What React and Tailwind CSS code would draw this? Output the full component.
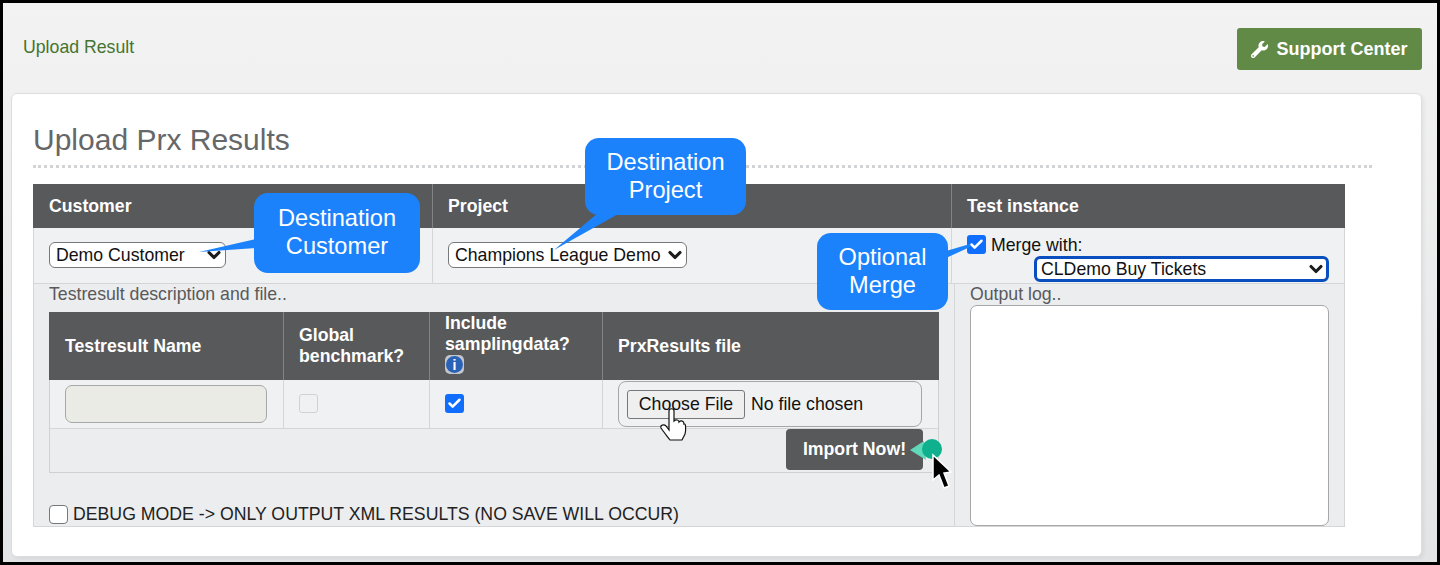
import { FaWrench } from "react-icons/fa";
import { Check, ChevronDown } from "lucide-react";

function Select({ label, className, bold }) {
  return (
    <div className={`relative bg-white text-[#111] rounded-[6px] flex items-center h-[26px] ${bold ? "border-[3px] border-[#0a4fc0] pl-[4px]" : "border border-[#77787a] pl-[6px]"} ${className}`}>
      {label}
      <ChevronDown size={20} strokeWidth={3.8} className={`absolute text-[#1c1c1c] ${bold ? "right-[0px] top-[0px]" : "right-[1px] top-[2px]"}`} />
    </div>
  );
}

function Checkbox({ checked, className = "" }) {
  if (checked) {
    return (
      <span className={`w-[19px] h-[19px] rounded-[3px] bg-[#0f6efd] flex items-center justify-center shrink-0 ${className}`}>
        <Check size={15} strokeWidth={4} className="text-white" />
      </span>
    );
  }
  return <span className={`w-[19px] h-[19px] rounded-[4px] border border-[#77787a] bg-white shrink-0 ${className}`} />;
}

function Callout({ className, lines }) {
  return (
    <div className={`absolute bg-[#1b82fb] text-white rounded-[14px] flex flex-col items-center justify-center pb-[2px] text-[23.6px] leading-[28px] ${className}`}>
      {lines.map((l) => (
        <span key={l}>{l}</span>
      ))}
    </div>
  );
}

export default function App() {
  return (
    <div className="relative w-[1440px] h-[565px] overflow-hidden border-[3px] border-black bg-gradient-to-b from-[#f3f3f3] to-[#e3e4e6] text-[17.7px] font-['Liberation_Sans',sans-serif]">
      {/* top bar */}
      <div className="h-[90px] pl-[20px] pr-[15px] flex justify-between">
        <a className="text-[#44742f] mt-[33px] leading-[22px]">Upload Result</a>
        <button className="mt-[25px] h-[42px] w-[185px] rounded-[3px] bg-[#628a47] text-white font-bold text-[18px] flex items-center justify-center gap-[8px]">
          <FaWrench size={17} />
          Support Center
        </button>
      </div>

      {/* card */}
      <div className="ml-[8px] w-[1411px] h-[464px] bg-white border border-[#dcddde] rounded-[6px] pl-[21px] shadow-[2px_2px_4px_rgba(0,0,0,0.06)]">
        <h1 className="pt-[29px] pb-[8px] leading-[34px] text-[30px] text-[#666768] w-[1339px] border-b-[3px] border-dotted border-[#d2d3d4]">
          Upload Prx Results
        </h1>

        <div className="mt-[16px] w-[1312px] h-[343px] flex flex-col border-x border-b border-[#d5d6d7] bg-[#ecedef]">
          {/* header */}
          <div className="h-[44px] grid grid-cols-[400px_519px_1fr] bg-[#58595b] text-white font-bold shrink-0 -mx-px">
            <div className="pl-[16px] flex items-center border-r border-[#828385]">Customer</div>
            <div className="pl-[15px] flex items-center border-r border-[#828385]">Project</div>
            <div className="pl-[15px] flex items-center">Test instance</div>
          </div>

          {/* selects row */}
          <div className="h-[56px] grid grid-cols-[399px_519px_1fr] bg-[#f0f1f2] border-b border-[#d5d6d7] shrink-0">
            <div className="pl-[15px] pt-[14px] border-r border-[#d5d6d7]">
              <Select label="Demo Customer" className="w-[177px]" />
            </div>
            <div className="pl-[15px] pt-[14px] border-r border-[#d5d6d7]">
              <Select label="Champions League Demo" className="w-[239px]" />
            </div>
            <div className="pl-[15px] pt-[7px]">
              <div className="flex items-center gap-[5px] h-[19px] text-[#111]">
                <Checkbox checked />
                <span className="pt-[1px]">Merge with:</span>
              </div>
              <Select bold label="CLDemo Buy Tickets" className="ml-[67px] mt-[2px] w-[295px]" />
            </div>
          </div>

          {/* lower section */}
          <div className="flex-1 flex">
            <div className="w-[921px] border-r border-[#d5d6d7] pl-[15px] flex flex-col">
              <div className="text-[#58595b] leading-[22px] -mt-[1px]">Testresult description and file..</div>
              <div className="mt-[7px] w-[890px] h-[161px] border-x border-b border-[#cfd0d1] flex flex-col">
                <div className="h-[68px] grid grid-cols-[235px_146px_173px_1fr] bg-[#58595b] text-white font-bold leading-[21px] -mx-px shrink-0">
                  <div className="pl-[16px] flex items-center border-r border-[#828385]">Testresult Name</div>
                  <div className="pl-[15px] flex items-center border-r border-[#828385]">
                    <span>Global<br />benchmark?</span>
                  </div>
                  <div className="pl-[15px] pt-[1px] border-r border-[#828385]">
                    Include<br />samplingdata?
                    <span className="block w-[19px] h-[19px] rounded-[5px] bg-[#c3c6ca] p-[1px]">
                      <span className="flex items-center justify-center w-full h-full rounded-full bg-[#2a62b8] text-white text-[14px] leading-none font-bold">i</span>
                    </span>
                  </div>
                  <div className="pl-[15px] flex items-center">PrxResults file</div>
                </div>
                <div className="h-[49px] grid grid-cols-[234px_146px_173px_1fr] bg-[#f0f1f2] border-b border-[#d5d6d7] shrink-0">
                  <div className="border-r border-[#d5d6d7] pl-[15px] pt-[5px]">
                    <div className="w-[202px] h-[38px] rounded-[7px] bg-[#ebebe6] border border-[#a6a7a8]" />
                  </div>
                  <div className="border-r border-[#d5d6d7] pl-[15px] pt-[14px]">
                    <span className="block w-[19px] h-[19px] rounded-[3px] border border-[#d0d1d2] bg-[#f0f1f2]" />
                  </div>
                  <div className="border-r border-[#d5d6d7] pl-[15px] pt-[14px]">
                    <Checkbox checked />
                  </div>
                  <div className="pl-[15px] pt-[1px]">
                    <div className="w-[304px] h-[46px] rounded-[8px] border border-[#a6a7a8] flex items-center pl-[8px] gap-[6px] text-[#111]">
                      <span className="w-[118px] h-[29px] rounded-[3px] border border-[#77787a] bg-[#efefef] flex items-center justify-center">Choose File</span>
                      No file chosen
                    </div>
                  </div>
                </div>
                <div className="flex justify-end pr-[15px]">
                  <button className="w-[137px] h-[41px] rounded-[4px] bg-[#58595b] text-white font-bold">Import Now!</button>
                </div>
              </div>
              <div className="mt-[30px] flex items-center gap-[5px] text-[#222] leading-[22px]">
                <Checkbox />
                DEBUG MODE -&gt; ONLY OUTPUT XML RESULTS (NO SAVE WILL OCCUR)
              </div>
            </div>
            <div className="flex-1 pl-[15px] flex flex-col">
              <div className="text-[#58595b] leading-[22px] -mt-[1px]">Output log..</div>
              <div className="w-[359px] h-[221px] bg-white border border-[#a6a7a8] rounded-[7px]" />
            </div>
          </div>
        </div>
      </div>

      {/* annotation overlay, offset by the 3px page border */}
      <svg className="absolute -left-[3px] -top-[3px]" width="1440" height="565">
        <polygon points="199,252 256,239 256,248" fill="#1b82fb" />
        <polygon points="554,250 598,213 620,213" fill="#1b82fb" />
        <polygon points="946,251 946,258 970,247 970,244" fill="#1b82fb" />
        <polygon points="910,450 924,441 926,460" fill="#5fd9b9" />
        <circle cx="932" cy="449" r="10" fill="#0eb08d" />
        <path d="M933 455 L933 480 L939 475 L944 488 L949 486 L944 473 L951 472 Z" fill="#000" stroke="#fff" strokeWidth="1.5" />
        <path d="M669 411 C669 408 674 408 674 411 L674 421 C676 419 679 420 679 422 C681 420 684 421 684 424 C686 423 686 430 685 434 L682 440 L670 440 C667 436 663 431 661 428 C660 425 664 424 666 426 L669 430 Z" fill="#fff" stroke="#111" strokeWidth="1.2" />
      </svg>
      <Callout className="left-[251px] top-[190px] w-[166px] h-[80px]" lines={["Destination", "Customer"]} />
      <Callout className="left-[582px] top-[135px] w-[161px] h-[77px]" lines={["Destination", "Project"]} />
      <Callout className="left-[814px] top-[230px] w-[131px] h-[77px]" lines={["Optional", "Merge"]} />
    </div>
  );
}
